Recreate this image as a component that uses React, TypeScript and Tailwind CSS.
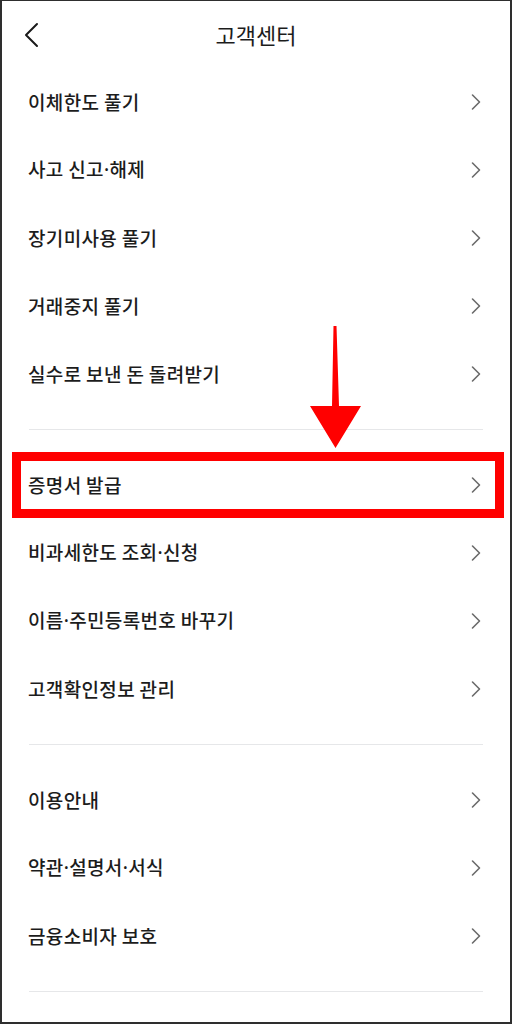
import React from "react";

const Chevron = () => (
  <svg width="12" height="18" viewBox="0 0 12 18" fill="none" className="shrink-0">
    <path d="M2.5 2 L9.5 9 L2.5 16" stroke="#6b6b6b" strokeWidth="1.6" strokeLinecap="round" strokeLinejoin="round" />
  </svg>
);

const Label = ({ text }: { text: string }) => {
  const parts = text.split("·");
  return (
    <span className="text-[19px] font-medium text-[#1c1c1c] tracking-[0.35px]">
      {parts.map((p, i) => (
        <React.Fragment key={i}>
          {i > 0 && <span style={{ fontFamily: '"Noto Sans", sans-serif' }}>·</span>}
          {p}
        </React.Fragment>
      ))}
    </span>
  );
};

const Row = ({ label }: { label: string }) => (
  <div className="flex items-center justify-between h-[68px] pl-[26px] pr-[28px]">
    <Label text={label} />
    <Chevron />
  </div>
);

const Divider = () => (
  <div className="py-[21px] px-[27px]">
    <div className="h-px bg-[#e6e7e9]" />
  </div>
);

export default function App() {
  const s1 = ["이체한도 풀기", "사고 신고·해제", "장기미사용 풀기", "거래중지 풀기", "실수로 보낸 돈 돌려받기"];
  const s2 = ["증명서 발급", "비과세한도 조회·신청", "이름·주민등록번호 바꾸기", "고객확인정보 관리"];
  const s3 = ["이용안내", "약관·설명서·서식", "금융소비자 보호"];
  return (
    <div
      className="relative w-[512px] h-[1024px] bg-white border-x-2 border-b-2 border-t border-[#2e2e2e] overflow-hidden"
      style={{ fontFamily: '"Noto Sans CJK KR", "Noto Sans", sans-serif' }}
    >
      <div className="relative flex items-center justify-center h-[67px]">
        <svg width="20" height="28" viewBox="0 0 20 28" fill="none" className="absolute left-[20px] top-[20px]">
          <path d="M15 3 L4 14 L15 25" stroke="#1a1a1a" strokeWidth="2" strokeLinecap="round" strokeLinejoin="round" />
        </svg>
        <span className="text-[22px] text-[#1c1c1c] pb-[1px]">고객센터</span>
      </div>
      {s1.map((l) => (
        <Row key={l} label={l} />
      ))}
      <Divider />
      {s2.map((l) => (
        <Row key={l} label={l} />
      ))}
      <Divider />
      {s3.map((l) => (
        <Row key={l} label={l} />
      ))}
      <Divider />

      {/* red highlight box */}
      <div className="absolute left-[10px] top-[451px] w-[492px] h-[66px] border-[9px] border-[#ff0000]" />

      {/* red arrow */}
      <svg width="56" height="124" viewBox="0 0 56 124" className="absolute left-[306px] top-[325px]">
        <path d="M25.5 0 L28.5 0 L31 80 L53 80 L27.5 122 L2 80 L24 80 Z" fill="#ff0000" />
      </svg>
    </div>
  );
}
